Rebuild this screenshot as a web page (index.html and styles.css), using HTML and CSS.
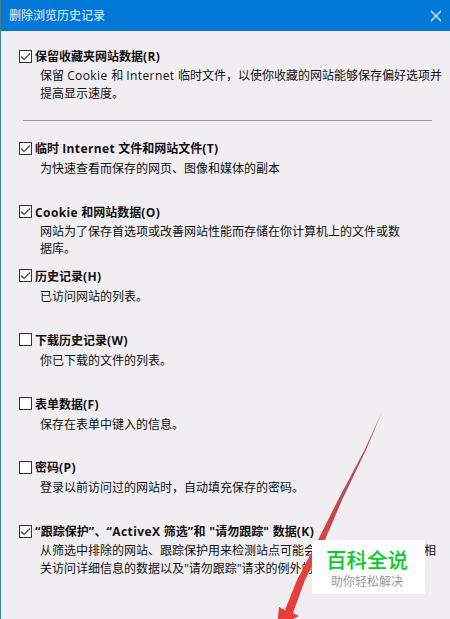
FILE: index.html
```html
<!DOCTYPE html>
<html lang="zh-CN">
<head>
    <meta charset="UTF-8">
    <title>删除浏览历史记录</title>
    <link rel="stylesheet" href="styles.css">
</head>
<body>
    <div class="dialog">
        <div class="titlebar">
            <span>删除浏览历史记录</span>
            <svg class="close" width="12" height="12" viewBox="0 0 12 12">
                <path d="M1 1 L11 11 M11 1 L1 11"></path>
            </svg>
        </div>

        <div class="options">
            <div class="option first">
                <label><input type="checkbox" checked><span>保留收藏夹网站数据<i>(R)</i></span></label>
                <p>保留 <i>Cookie </i>和 <i>Internet </i>临时文件，以使你收藏的网站能够保存偏好选项并<br>提高显示速度。</p>
            </div>

            <div class="option">
                <label><input type="checkbox" checked><span>临时 <i>Internet</i> 文件和网站文件<i>(T)</i></span></label>
                <p class="single">为快速查看而保存的网页、图像和媒体的副本</p>
            </div>

            <div class="option">
                <label><input type="checkbox" checked><span><i>Cookie</i> 和网站数据<i>(O)</i></span></label>
                <p>网站为了保存首选项或改善网站性能而存储在你计算机上的文件或数<br>据库。</p>
            </div>

            <div class="option">
                <label><input type="checkbox" checked><span>历史记录<i>(H)</i></span></label>
                <p class="single">已访问网站的列表。</p>
            </div>

            <div class="option">
                <label><input type="checkbox"><span>下载历史记录<i>(W)</i></span></label>
                <p class="single">你已下载的文件的列表。</p>
            </div>

            <div class="option">
                <label><input type="checkbox"><span>表单数据<i>(F)</i></span></label>
                <p class="single">保存在表单中键入的信息。</p>
            </div>

            <div class="option">
                <label><input type="checkbox"><span>密码<i>(P)</i></span></label>
                <p class="single">登录以前访问过的网站时，自动填充保存的密码。</p>
            </div>

            <div class="option">
                <label><input type="checkbox" checked><span><i>“</i>跟踪保护<i>”</i>、<i>“ActiveX </i>筛选<i>”</i>和<i> "</i>请勿跟踪<i>" </i>数据<i>(K)</i></span></label>
                <p>从筛选中排除的网站、跟踪保护用来检测站点可能会<span class="covered"></span>相<br>关访问详细信息的数据以及"请勿跟踪"请求的例外的</p>
            </div>
        </div>

        <!-- Arrow pointing to the bottom of the dialog -->
        <svg class="arrow" width="120" height="210" viewBox="0 0 120 210">
            <defs>
                <linearGradient id="arrowFill" x1="0" y1="0" x2="0" y2="1">
                    <stop offset="0" stop-color="#a85c60"></stop>
                    <stop offset="0.4" stop-color="#b84b4e"></stop>
                    <stop offset="0.65" stop-color="#e04441"></stop>
                    <stop offset="1" stop-color="#e83c36"></stop>
                </linearGradient>
            </defs>
            <path fill="url(#arrowFill)" d="M113 3 L95.5 41 L69 91 L49 131 L28 171 L16 201 L10 198 L8 218 L30 207 L24 204 L36 171 L56 131 L73 91 L97 41 Z"></path>
        </svg>

        <div class="badge">
            <div class="badge-name">百科全说</div>
            <div class="badge-text">助你轻松解决</div>
        </div>
    </div>
</body>
</html>
```
FILE: styles.css
```css
body {
    margin: 0;
    font-family: "Open Sans", "Noto Sans CJK SC", sans-serif;
    font-size: 12px;
    color: #111;
}

.dialog {
    position: relative;
    box-sizing: border-box;
    width: 450px;
    height: 619px;
    overflow: hidden;
    background-color: #f0eef0;
    border-left: 1px solid #4b7f8e;
    box-shadow: inset 2px 0 0 #dff0f6;
}

.titlebar {
    display: flex;
    justify-content: space-between;
    align-items: center;
    box-sizing: border-box;
    height: 31px;
    padding: 0 8px;
    background-color: #0178d7;
    color: #e4f6ff;
}

.titlebar span {
    position: relative;
    top: -1px;
}

.close {
    fill: none;
    stroke: #e4f6ff;
    stroke-width: 1.3;
}

.options {
    padding: 16px 0 0 18px;
}

.option {
    height: 63.9px;
    white-space: nowrap;
}

.option.first {
    height: 73px;
    margin: 0 18px 18px 0;
    border-bottom: 1px solid #999;
    border-image: linear-gradient(to right, transparent 5px, #999 5px) 1;
}

/* latin letters run a little wider than the default */
i {
    font-style: normal;
    letter-spacing: 0.4px;
}

label {
    display: flex;
    align-items: center;
    gap: 3px;
    height: 18px;
    font-weight: bold;
}

input[type="checkbox"] {
    appearance: none;
    box-sizing: border-box;
    width: 13px;
    height: 13px;
    margin: 0;
    border: 1px solid #333;
    background-color: white;
}

input[type="checkbox"]:checked {
    background-image: url("data:image/svg+xml,%3Csvg xmlns='http://www.w3.org/2000/svg' viewBox='0 0 11 11'%3E%3Cpath d='M1 5.5 L4 8.5 L10 2.5' fill='none' stroke='%23444' stroke-width='1.2'/%3E%3C/svg%3E");
}

p {
    margin: 2px 0 0 21px;
    line-height: 17.5px;
}

p.single {
    margin-top: 3px;
}

.covered {
    display: inline-block;
    width: 108px;
}

.arrow {
    position: absolute;
    left: 268px;
    top: 409px;
}

.badge {
    position: absolute;
    left: 311px;
    top: 540px;
    box-sizing: border-box;
    width: 113px;
    height: 54px;
    padding: 7px 3px 0 0;
    background-color: white;
    text-align: center;
    white-space: nowrap;
}

.badge-name {
    font-size: 20.5px;
    font-weight: 500;
    line-height: 27px;
    color: #05cb2b;
}

.badge-text {
    line-height: 15px;
    color: #999;
}
```
